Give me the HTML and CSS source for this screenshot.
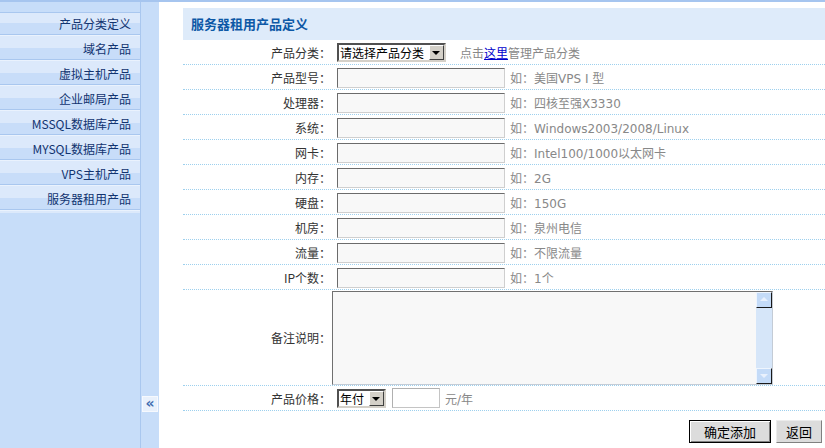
FILE: index.html
```html
<!DOCTYPE html>
<html lang="zh-CN">
<head>
    <meta charset="UTF-8">
    <title>服务器租用产品定义</title>
    <link rel="stylesheet" href="styles.css">
</head>
<body>
    <div class="topline"></div>
    <div class="frame">
        <div class="side">
            <ul class="menu">
                <li>产品分类定义</li>
                <li>域名产品</li>
                <li>虚拟主机产品</li>
                <li>企业邮局产品</li>
                <li>MSSQL数据库产品</li>
                <li>MYSQL数据库产品</li>
                <li>VPS主机产品</li>
                <li>服务器租用产品</li>
            </ul>
        </div>
        <div class="split"><span class="fold">«</span></div>
        <div class="main">
            <div class="title">服务器租用产品定义</div>
            <div class="row">
                <div class="label">产品分类：</div>
                <span class="sel"><select class="cat"><option>请选择产品分类</option></select></span>
                <span class="tip">点击<a href="#">这里</a>管理产品分类</span>
            </div>
            <div class="row">
                <div class="label">产品型号：</div>
                <input class="txt" type="text"><span class="hint">如：美国VPS I 型</span>
            </div>
            <div class="row">
                <div class="label">处理器：</div>
                <input class="txt" type="text"><span class="hint">如：四核至强X3330</span>
            </div>
            <div class="row">
                <div class="label">系统：</div>
                <input class="txt" type="text"><span class="hint">如：Windows2003/2008/Linux</span>
            </div>
            <div class="row">
                <div class="label">网卡：</div>
                <input class="txt" type="text"><span class="hint">如：Intel100/1000以太网卡</span>
            </div>
            <div class="row">
                <div class="label">内存：</div>
                <input class="txt" type="text"><span class="hint">如：2G</span>
            </div>
            <div class="row">
                <div class="label">硬盘：</div>
                <input class="txt" type="text"><span class="hint">如：150G</span>
            </div>
            <div class="row">
                <div class="label">机房：</div>
                <input class="txt" type="text"><span class="hint">如：泉州电信</span>
            </div>
            <div class="row">
                <div class="label">流量：</div>
                <input class="txt" type="text"><span class="hint">如：不限流量</span>
            </div>
            <div class="row">
                <div class="label">IP个数：</div>
                <input class="txt" type="text"><span class="hint">如：1个</span>
            </div>
            <div class="row row-memo">
                <div class="label">备注说明：</div>
                <div class="memo-box">
                    <textarea class="memo"></textarea>
                    <div class="vbar"><span class="up"></span><span class="down"></span></div>
                </div>
            </div>
            <div class="row">
                <div class="label">产品价格：</div>
                <span class="sel"><select class="pay"><option>年付</option></select></span>
                <input class="price" type="text"><span class="hint">元/年</span>
            </div>
            <div class="actions">
                <button class="btn btn-main">确定添加</button>
                <button class="btn">返回</button>
            </div>
        </div>
    </div>
</body>
</html>
```

FILE: styles.css
```css
html, body {
    margin: 0;
    height: 100%;
    overflow: hidden;
}
body {
    font-family: "DejaVu Sans", "Noto Sans CJK SC", sans-serif;
    font-size: 12px;
    background: #fff;
}
.topline {
    height: 2px;
    background: #a6c5ef;
}
.frame {
    display: flex;
    height: calc(100vh - 2px);
}

/* left menu */
.side {
    width: 140px;
    background: #c7ddf9;
    border-right: 1px solid #a9c7ef;
    padding-top: 10px;
    font-family: "Noto Sans CJK SC", sans-serif;
}
.menu {
    list-style: none;
    margin: 0;
    padding: 0;
    border-top: 1px solid #a9c7ef;
}
.menu li {
    height: 25px;
    line-height: 21px;
    text-align: right;
    padding-right: 9px;
    color: #123470;
    background: linear-gradient(#dce9fb 0 10px, #c8ddf9 10px 21px, #a9c7ef 21px 22px, #eaf2fd 22px 23px, #dce9fb 23px);
}
.split {
    width: 18px;
    background: #c7ddf9;
    padding-top: 394px;
}
.fold {
    display: block;
    width: 14px;
    height: 14px;
    margin-left: 1px;
    line-height: 13px;
    text-align: center;
    font-size: 14px;
    font-weight: bold;
    color: #3f6db0;
    background: #e9f1fc;
    border: 1px solid #f6f9fe;
}

/* form */
.main {
    flex: 1;
    padding: 6px 0 0 24px;
}
.title {
    height: 32px;
    line-height: 32px;
    padding-left: 8px;
    background: #deebfa;
    color: #0d58a6;
    font-family: "Noto Sans CJK SC", sans-serif;
    font-size: 13px;
    font-weight: bold;
}
.row {
    display: flex;
    align-items: center;
    height: 25px;
    box-sizing: border-box;
    border-bottom: 1px dotted #9dd0ee;
}
.row-memo {
    height: 96px;
}
.label {
    width: 148px;
    padding-right: 1px;
    text-align: right;
    color: #333;
    flex: none;
    font-family: "Noto Sans CJK SC", sans-serif;
}
.txt {
    width: 168px;
    height: 20px;
    margin: 1px 0 0 5px;
    box-sizing: border-box;
    border: 1px solid;
    border-color: #6b6b6b #cfcfcf #cfcfcf #6b6b6b;
    background: #f8f8f8;
    padding: 0 2px;
}
.hint {
    margin-left: 5px;
    color: #888;
}
.tip {
    margin-left: 14px;
    color: #888;
}
.tip a {
    color: #0000cc;
}
.sel {
    position: relative;
    display: inline-block;
    margin-left: 5px;
    height: 19px;
}
.sel select {
    appearance: none;
    height: 19px;
    box-sizing: border-box;
    border: 2px solid;
    border-color: #505050 #d4d0c8 #d4d0c8 #505050;
    background: #fff;
    color: #000;
    font-family: "Noto Sans CJK SC", sans-serif;
    font-size: 12px;
    line-height: 15px;
    padding: 0 18px 0 1px;
}
.cat {
    width: 109px;
}
.pay {
    width: 49px;
}
.sel::before {
    content: "";
    position: absolute;
    right: 2px;
    top: 2px;
    width: 13px;
    height: 13px;
    background: #d4d0c8;
    border: 1px solid;
    border-color: #fff #404040 #404040 #fff;
    pointer-events: none;
}
.sel::after {
    content: "";
    position: absolute;
    right: 6px;
    top: 8px;
    border-top: 4px solid #000;
    border-left: 4px solid transparent;
    border-right: 4px solid transparent;
    pointer-events: none;
}
.price {
    width: 48px;
    height: 20px;
    margin-left: 6px;
    box-sizing: border-box;
    border: 1px solid #c4c4c4;
    border-top-color: #b0b0b0;
    border-left-color: #b0b0b0;
    background: #fff;
}
.memo-box {
    display: flex;
    width: 441px;
    height: 94px;
    box-sizing: border-box;
    border: 1px solid;
    border-color: #707070 #c4ccd6 #c4ccd6 #707070;
    background: #f8f8f8;
}
.memo {
    flex: 1;
    margin: 0;
    border: 0;
    padding: 2px;
    background: transparent;
    resize: none;
    outline: none;
}
.vbar {
    width: 16px;
    background: #d6e6f9;
    display: flex;
    flex-direction: column;
    justify-content: space-between;
}
.vbar span {
    position: relative;
    height: 16px;
    box-sizing: border-box;
    background: #c4dbf8;
    border: 1px solid;
    border-color: #eef5fe #1a1a1a #1a1a1a #eef5fe;
}
.vbar .up::after {
    content: "";
    position: absolute;
    left: 3px;
    top: 4px;
    border-bottom: 4px solid #e9f1fd;
    border-left: 4px solid transparent;
    border-right: 4px solid transparent;
}
.vbar .down::after {
    content: "";
    position: absolute;
    left: 3px;
    top: 5px;
    border-top: 4px solid #e9f1fd;
    border-left: 4px solid transparent;
    border-right: 4px solid transparent;
}
.actions {
    display: flex;
    justify-content: flex-end;
    gap: 5px;
    padding: 9px 3px 0 0;
}
.btn {
    height: 23px;
    width: 46px;
    padding: 0;
    font-family: "Noto Sans CJK SC", sans-serif;
    font-size: 13px;
    color: #000;
    background: #dcdcdc;
    border: 1px solid;
    border-color: #ececec #808080 #808080 #ececec;
}
.btn-main {
    width: 82px;
    border: 1px solid #000;
    box-shadow: inset 1px 1px #fff, inset -1px -1px #808080;
}
```
